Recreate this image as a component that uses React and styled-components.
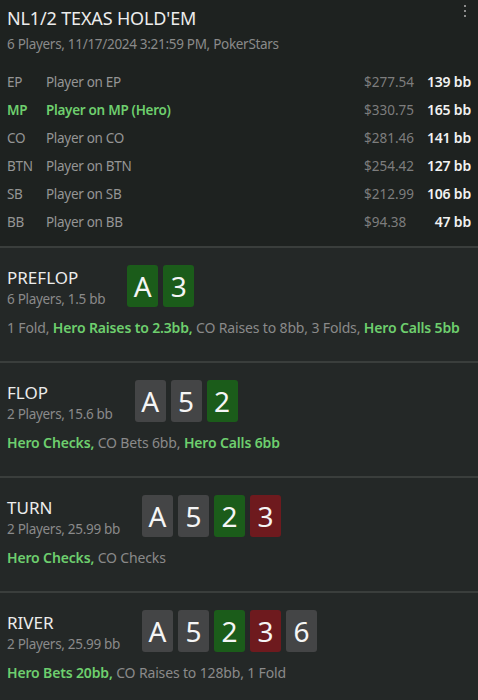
import React from "react";
import styled, { createGlobalStyle } from "styled-components";

const Global = createGlobalStyle`
  html, body { margin: 0; padding: 0; background: #242827; }
  body { font-family: "Noto Sans", "Open Sans", sans-serif; }
  * { box-sizing: border-box; }
`;

const Page = styled.div`
  width: 478px;
  min-height: 700px;
  background: #242827;
  color: #e8e8e8;
`;

const Header = styled.header`
  position: relative;
  background: #1e2220;
  padding: 6px 7px 10px 7px;
  border-bottom: 2px solid #3a3e3c;
`;

const Title = styled.h1`
  margin: 0;
  font-size: 18px;
  line-height: 24px;
  font-weight: 400;
  letter-spacing: -0.15px;
  color: #ececec;
`;

const Subtitle = styled.div`
  margin-top: 4px;
  font-size: 13.5px;
  line-height: 20px;
  letter-spacing: -0.3px;
  color: #8a8a8a;
`;

const MenuDots = styled.div`
  position: absolute;
  top: 5px;
  right: 12px;
  display: flex;
  flex-direction: column;
  gap: 3px;
  span {
    width: 2px;
    height: 2px;
    background: #8c8c8c;
  }
`;

const Players = styled.div`
  margin-top: 14px;
  display: grid;
  grid-template-columns: 39px 1fr 61px 46px;
`;

const Cell = styled.div`
  height: 28px;
  line-height: 28px;
  font-size: 13.5px;
  letter-spacing: ${(p) => (p.$dim ? "0" : "-0.3px")};
  white-space: nowrap;
  color: ${(p) => (p.$hero ? "#6ecf6e" : p.$dim ? "#7d7d7d" : "#959595")};
  font-weight: ${(p) => (p.$hero ? 600 : 400)};
`;

const BB = styled(Cell)`
  text-align: right;
  font-size: 14px;
  letter-spacing: -0.2px;
  color: #f2f2f2;
  font-weight: 600;
`;

const Street = styled.section`
  padding: 17px 7px 23px 7px;
  border-bottom: 2px solid #3a3e3c;
  &:last-child { border-bottom: none; }
`;

const StreetRow = styled.div`
  display: flex;
  align-items: flex-start;
  gap: 22px;
`;

const StreetInfo = styled.div`
  margin-top: 2px;
`;

const StreetName = styled.div`
  font-size: 17px;
  line-height: 22px;
  color: #ececec;
`;

const StreetMeta = styled.div`
  font-size: 13.5px;
  line-height: 20px;
  letter-spacing: -0.3px;
  color: #8a8a8a;
  white-space: nowrap;
`;

const Cards = styled.div`
  display: flex;
  gap: 5px;
`;

const cardColors = {
  hero: "#1b5c1a",
  gray: "#444546",
  red: "#6e1a1e",
};

const Card = styled.div`
  width: 31px;
  height: 42px;
  border-radius: 3px;
  background: ${(p) => cardColors[p.$kind]};
  color: #f5f5f5;
  font-size: 28px;
  line-height: 42px;
  text-align: center;
`;

const Actions = styled.div`
  margin-top: 9px;
  font-size: 14px;
  line-height: 20px;
  letter-spacing: -0.15px;
  color: #8a8a8a;
  white-space: nowrap;
`;

const HeroAct = styled.span`
  color: #6ecf6e;
  font-weight: 600;
`;

const players = [
  ["EP", "Player on EP", "$277.54", "139 bb"],
  ["MP", "Player on MP (Hero)", "$330.75", "165 bb", true],
  ["CO", "Player on CO", "$281.46", "141 bb"],
  ["BTN", "Player on BTN", "$254.42", "127 bb"],
  ["SB", "Player on SB", "$212.99", "106 bb"],
  ["BB", "Player on BB", "$94.38", "47 bb"],
];

const streets = [
  {
    name: "PREFLOP",
    meta: "6 Players, 1.5 bb",
    cards: [["A", "hero"], ["3", "hero"]],
    actions: [
      ["1 Fold, "],
      ["Hero Raises to 2.3bb,", true],
      [" CO Raises to 8bb, 3 Folds, "],
      ["Hero Calls 5bb", true],
    ],
  },
  {
    name: "FLOP",
    meta: "2 Players, 15.6 bb",
    cards: [["A", "gray"], ["5", "gray"], ["2", "hero"]],
    actions: [
      ["Hero Checks,", true],
      [" CO Bets 6bb, "],
      ["Hero Calls 6bb", true],
    ],
  },
  {
    name: "TURN",
    meta: "2 Players, 25.99 bb",
    cards: [["A", "gray"], ["5", "gray"], ["2", "hero"], ["3", "red"]],
    actions: [["Hero Checks,", true], [" CO Checks"]],
  },
  {
    name: "RIVER",
    meta: "2 Players, 25.99 bb",
    cards: [["A", "gray"], ["5", "gray"], ["2", "hero"], ["3", "red"], ["6", "gray"]],
    actions: [["Hero Bets 20bb,", true], [" CO Raises to 128bb, 1 Fold"]],
  },
];

export default function App() {
  return (
    <Page>
      <Global />
      <Header>
        <Title>NL1/2 TEXAS HOLD'EM</Title>
        <Subtitle>6 Players, 11/17/2024 3:21:59 PM, PokerStars</Subtitle>
        <MenuDots>
          <span />
          <span />
          <span />
        </MenuDots>
        <Players>
          {players.map(([pos, name, amt, bb, hero]) => (
            <React.Fragment key={pos}>
              <Cell $hero={hero}>{pos}</Cell>
              <Cell $hero={hero}>{name}</Cell>
              <Cell $dim>{amt}</Cell>
              <BB>{bb}</BB>
            </React.Fragment>
          ))}
        </Players>
      </Header>
      {streets.map((s) => (
        <Street key={s.name}>
          <StreetRow>
            <StreetInfo>
              <StreetName>{s.name}</StreetName>
              <StreetMeta>{s.meta}</StreetMeta>
            </StreetInfo>
            <Cards>
              {s.cards.map(([r, k], i) => (
                <Card key={i} $kind={k}>
                  {r}
                </Card>
              ))}
            </Cards>
          </StreetRow>
          <Actions>
            {s.actions.map(([t, h], i) =>
              h ? <HeroAct key={i}>{t}</HeroAct> : <span key={i}>{t}</span>
            )}
          </Actions>
        </Street>
      ))}
    </Page>
  );
}
